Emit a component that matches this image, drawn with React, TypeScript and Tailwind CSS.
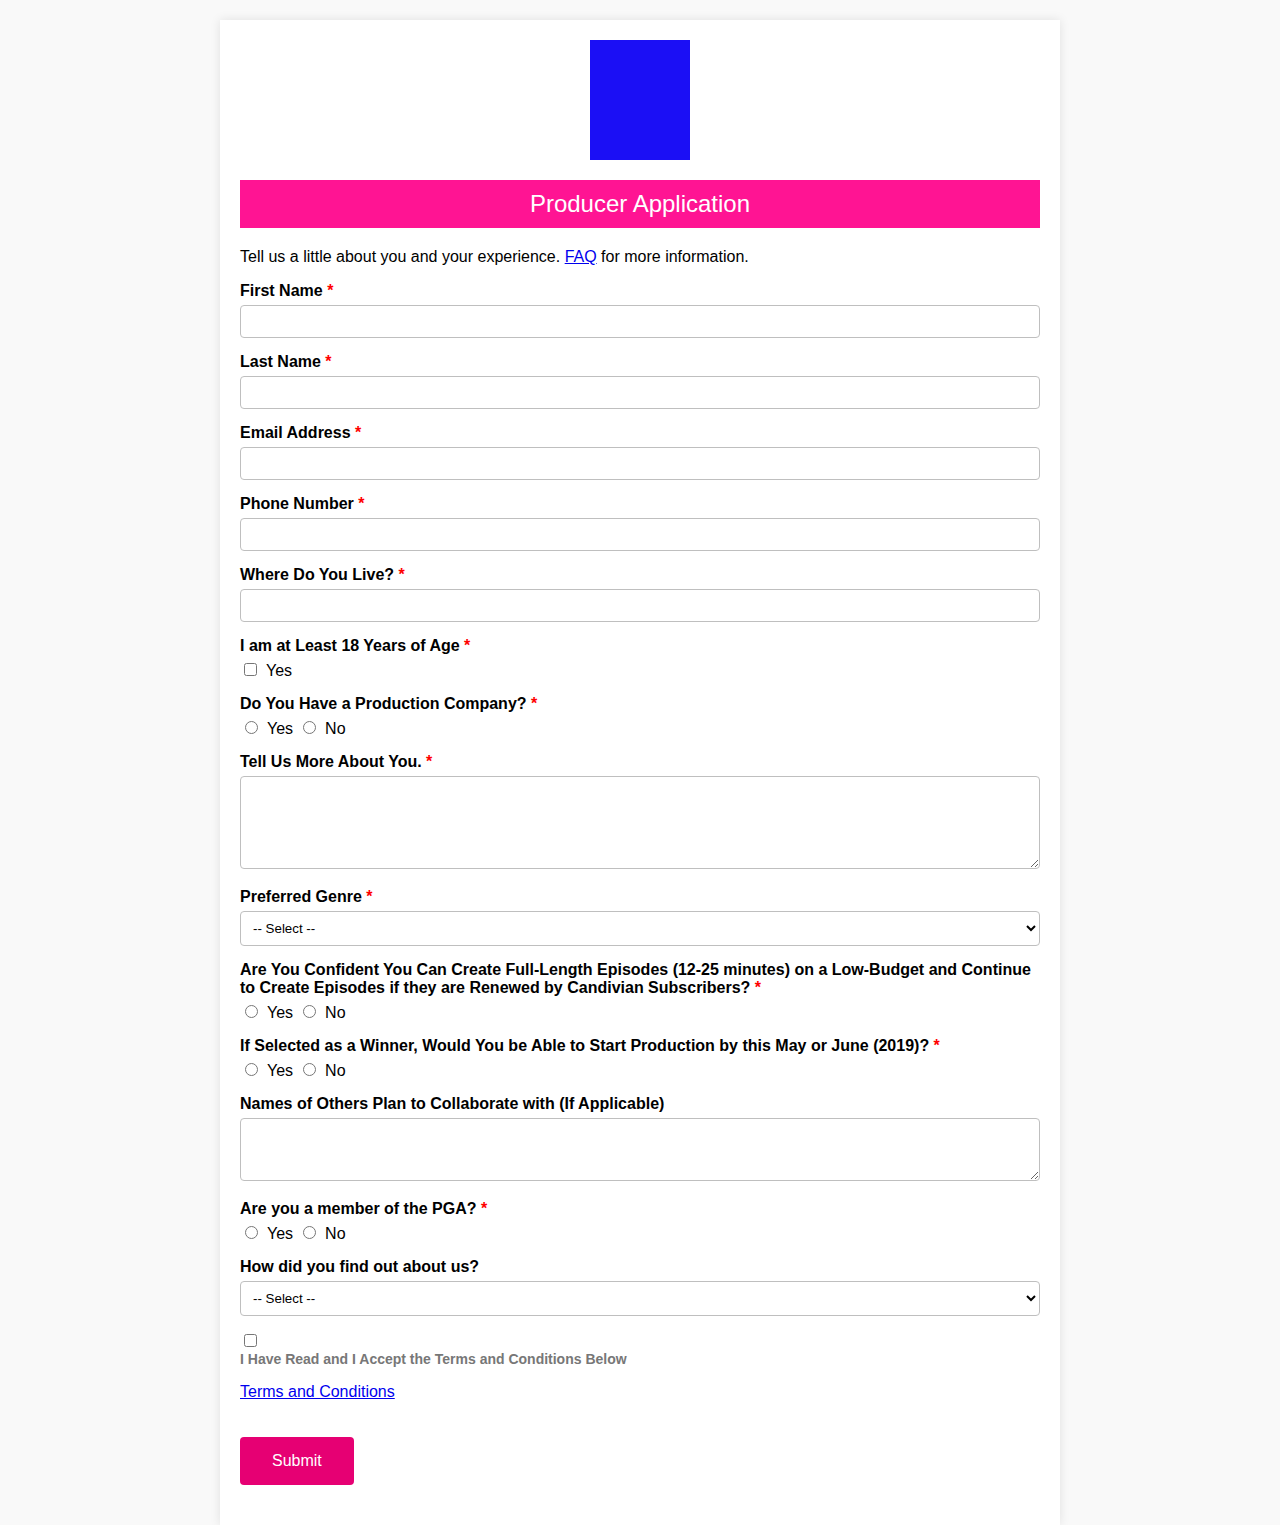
import type { ReactNode } from 'react';

const control =
  'block w-full rounded border border-[#bfbfbf] bg-white text-[13.3333px] leading-[15px] text-black';

function Label({ text, htmlFor, required = true }: { text: string; htmlFor?: string; required?: boolean }) {
  const body = (
    <>
      {text}
      {required && <span className="text-[#ff0000]"> *</span>}
    </>
  );
  return htmlFor ? (
    <label htmlFor={htmlFor} className="mb-[5px] block font-bold">
      {body}
    </label>
  ) : (
    <legend className="mb-[5px] block font-bold">{body}</legend>
  );
}

function TextField({ id, label, type = 'text' }: { id: string; label: string; type?: string }) {
  return (
    <div>
      <Label htmlFor={id} text={label} />
      <input id={id} name={id} type={type} required className={`${control} p-2`} />
    </div>
  );
}

function AreaField({ id, label, required, rows }: { id: string; label: string; required: boolean; rows: number }) {
  return (
    <div className="mb-1">
      <Label htmlFor={id} text={label} required={required} />
      <textarea id={id} name={id} rows={rows} className={`${control} resize p-2`} />
    </div>
  );
}

function SelectField({ id, label, required, options }: { id: string; label: string; required: boolean; options: string[] }) {
  return (
    <div>
      <Label htmlFor={id} text={label} required={required} />
      <select id={id} name={id} className={`${control} h-[35px] p-2`}>
        <option value="">-- Select --</option>
        {options.map((o) => (
          <option key={o}>{o}</option>
        ))}
      </select>
    </div>
  );
}

function Choice({ type, name, value }: { type: 'checkbox' | 'radio'; name: string; value: string }) {
  const spacing = type === 'radio' ? 'ml-[5px] mr-[9px]' : 'ml-1 mr-[9px]';
  return (
    <label className="flex h-5 items-end">
      <input type={type} name={name} value={value} className={`${spacing} mb-1 size-[13px]`} />
      <span>{value}</span>
    </label>
  );
}

function Group({ label, children }: { label: string; children: ReactNode }) {
  return (
    <fieldset>
      <Label text={label} />
      <div className="flex gap-[5px]">{children}</div>
    </fieldset>
  );
}

function YesNo({ name, label }: { name: string; label: string }) {
  return (
    <Group label={label}>
      <Choice type="radio" name={name} value="Yes" />
      <Choice type="radio" name={name} value="No" />
    </Group>
  );
}

export default function App() {
  return (
    <div className="min-h-screen bg-[#f9f9f9] pt-5 font-['Liberation_Sans',Arial,sans-serif] text-base leading-[18px] text-black">
      <main className="mx-auto max-w-[840px] bg-white p-5 pb-10 shadow-[0_0_10px_rgba(0,0,0,0.1)]">
        <div className="mx-auto h-[120px] w-[100px] bg-[#1b0ff5]" />
        <h1 className="mt-5 bg-[#ff1493] p-2.5 text-center text-2xl leading-7 text-white">Producer Application</h1>
        <p className="mt-5">
          Tell us a little about you and your experience.{' '}
          <a href="#faq" className="text-[#0000ee] underline">FAQ</a> for more information.
        </p>
        <form className="mt-4 flex flex-col gap-[15px]" onSubmit={(e) => e.preventDefault()}>
          <TextField id="first" label="First Name" />
          <TextField id="last" label="Last Name" />
          <TextField id="email" label="Email Address" type="email" />
          <TextField id="phone" label="Phone Number" type="tel" />
          <TextField id="live" label="Where Do You Live?" />
          <Group label="I am at Least 18 Years of Age">
            <Choice type="checkbox" name="age" value="Yes" />
          </Group>
          <YesNo name="company" label="Do You Have a Production Company?" />
          <AreaField id="about" label="Tell Us More About You." required rows={5} />
          <SelectField id="genre" label="Preferred Genre" required options={['Comedy', 'Drama']} />
          <YesNo
            name="confident"
            label="Are You Confident You Can Create Full-Length Episodes (12-25 minutes) on a Low-Budget and Continue to Create Episodes if they are Renewed by Candivian Subscribers?"
          />
          <YesNo name="start" label="If Selected as a Winner, Would You be Able to Start Production by this May or June (2019)?" />
          <AreaField id="others" label="Names of Others Plan to Collaborate with (If Applicable)" required={false} rows={3} />
          <YesNo name="pga" label="Are you a member of the PGA?" />
          <SelectField id="source" label="How did you find out about us?" required={false} options={['Friend', 'Social Media']} />
          <div className="pt-[3px]">
            <input id="terms" type="checkbox" className="mx-1 block size-[13px]" />
            <label htmlFor="terms" className="mt-1 block text-sm leading-4 font-bold text-[#777]">
              I Have Read and I Accept the Terms and Conditions Below
            </label>
          </div>
          <a href="#terms" className="self-start text-[#0000ee] underline leading-5">Terms and Conditions</a>
          <button type="submit" className="mt-5 h-12 self-start rounded bg-[#e60073] px-8 text-white">Submit</button>
        </form>
      </main>
    </div>
  );
}
